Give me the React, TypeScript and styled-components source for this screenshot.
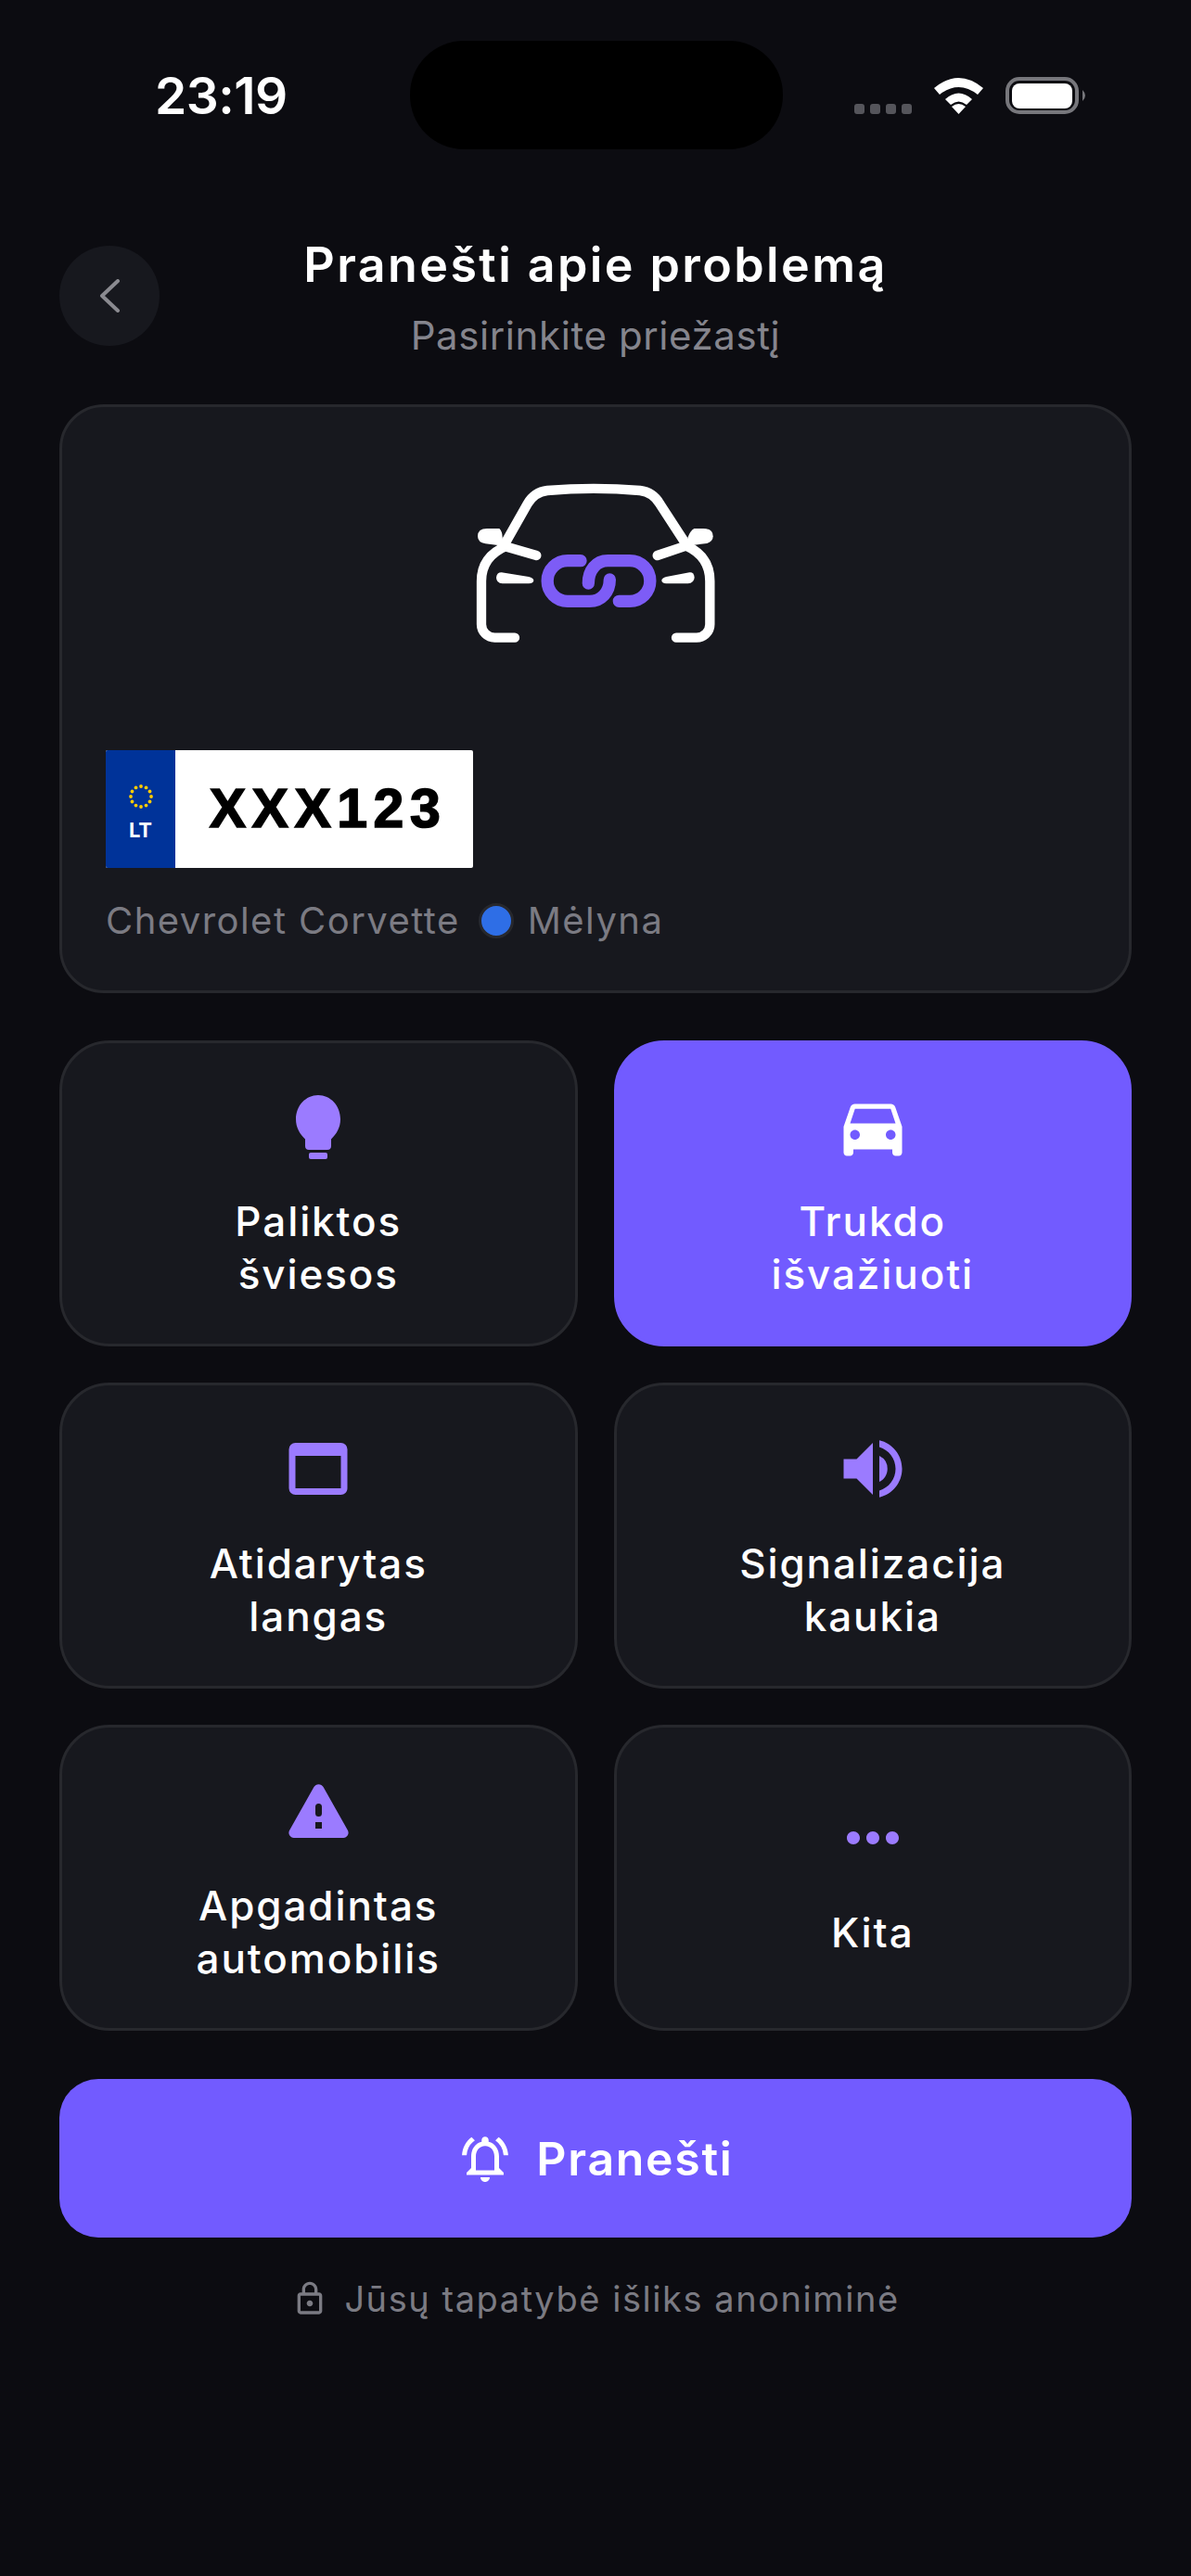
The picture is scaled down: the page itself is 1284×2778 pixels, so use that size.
import * as React from "react";
import styled, { createGlobalStyle } from "styled-components";
import {
  MdDirectionsCar,
  MdMoreHoriz,
  MdOutlineLock,
  MdOutlineNotificationsActive,
  MdVolumeUp,
  MdWebAsset,
} from "react-icons/md";

const Global = createGlobalStyle`
  html, body {
    margin: 0;
    padding: 0;
    background: #0c0c11;
  }
  * { box-sizing: border-box; }
`;

const Screen = styled.div`
  width: 1284px;
  height: 2778px;
  background: #0c0c11;
  color: #fff;
  font-family: Inter, "Liberation Sans", sans-serif;
  padding: 44px 64px 0;
  display: flex;
  flex-direction: column;
  overflow: hidden;
`;

const StatusBar = styled.div`
  display: grid;
  grid-template-columns: 275px 402px 1fr;
  height: 117px;
  margin: 0 -64px;
  padding-left: 167px;
  padding-right: 111px;
`;

const Clock = styled.div`
  font-size: 55px;
  font-weight: 600;
  line-height: 40px;
  letter-spacing: -0.5px;
  margin-top: 39px;
`;

const Island = styled.div`
  background: #000;
  border-radius: 58px;
`;

const StatusIcons = styled.div`
  display: flex;
  justify-content: flex-end;
  align-items: flex-start;
  margin-top: 36px;
`;

const Header = styled.div`
  display: grid;
  grid-template-columns: 108px 1fr 108px;
  align-items: start;
  margin-top: 94px;
`;

const BackButton = styled.div`
  width: 108px;
  height: 108px;
  border-radius: 50%;
  background: #17181e;
  display: flex;
  align-items: center;
  justify-content: center;
  margin-top: 10px;
`;

const Heading = styled.div`
  text-align: center;
`;

const Title = styled.div`
  font-size: 52px;
  font-weight: 600;
  line-height: 62px;
  letter-spacing: 2.4px;
`;

const Subtitle = styled.div`
  font-size: 42px;
  line-height: 50px;
  margin-top: 20px;
  color: #85858d;
  letter-spacing: 0.6px;
`;

const VehicleCard = styled.div`
  margin-top: 49px;
  height: 635px;
  background: #17181e;
  border: 3px solid #27282d;
  border-radius: 48px;
  padding: 51px 47px 0;
  display: flex;
  flex-direction: column;
`;

const LogoWrap = styled.div`
  display: flex;
  justify-content: center;
  margin-right: 4px;
  height: 230px;
`;

const Plate = styled.div`
  margin-top: 89px;
  width: 396px;
  height: 127px;
  display: flex;
  background: #fff;
  border-radius: 2px;
  overflow: hidden;
`;

const PlateBand = styled.div`
  width: 75px;
  background: #003399;
  display: flex;
  flex-direction: column;
  align-items: center;
  padding-top: 36px;
`;

const PlateCountry = styled.div`
  font-size: 22px;
  font-weight: 700;
  line-height: 22px;
  margin-top: 11px;
  color: #fff;
`;

const PlateNumber = styled.div`
  flex: 1;
  color: #000;
  font-family: "Liberation Sans", Arial, sans-serif;
  font-size: 59px;
  font-weight: 700;
  letter-spacing: 6.5px;
  -webkit-text-stroke: 1.6px #000;
  text-align: center;
  line-height: 127px;
  padding-left: 8px;
`;

const VehicleMeta = styled.div`
  margin-top: 32px;
  display: flex;
  align-items: center;
  font-size: 40px;
  line-height: 50px;
  letter-spacing: 1.45px;
  color: #7b7b83;
`;

const ColorDot = styled.span<{ $color: string }>`
  width: 38px;
  height: 38px;
  border-radius: 50%;
  background: ${(p) => p.$color};
  border: 3px solid #27282d;
  margin: 0 15px 0 20px;
`;

const ReasonGrid = styled.div`
  margin-top: 51px;
  display: grid;
  grid-template-columns: 1fr 1fr;
  grid-auto-rows: 330px;
  column-gap: 39px;
  row-gap: 39px;
`;

const Reason = styled.div<{ $active?: boolean }>`
  background: ${(p) => (p.$active ? "#725bff" : "#17181e")};
  border: 3px solid ${(p) => (p.$active ? "#725bff" : "#27282d")};
  border-radius: 54px;
  display: flex;
  flex-direction: column;
  align-items: center;
  justify-content: center;
  color: ${(p) => (p.$active ? "#fff" : "#9b7bff")};
  padding-top: 2px;
`;

const ReasonIcon = styled.div`
  height: 84px;
  display: flex;
  align-items: center;
  justify-content: center;
  font-size: 84px;
  svg { display: block; }
`;

const ReasonLabel = styled.div`
  margin-top: 32px;
  font-size: 44px;
  font-weight: 500;
  line-height: 57px;
  letter-spacing: 1.9px;
  text-align: center;
  color: #fff;
  white-space: pre-line;
`;

const SubmitButton = styled.div`
  margin-top: 52px;
  height: 171px;
  border-radius: 42px;
  background: #725bff;
  display: flex;
  align-items: center;
  justify-content: center;
  gap: 25px;
  font-size: 50px;
  font-weight: 600;
  letter-spacing: 1.7px;
  svg { display: block; }
`;

const Anonymous = styled.div`
  margin-top: 43px;
  display: flex;
  align-items: center;
  justify-content: center;
  gap: 17px;
  font-size: 38px;
  line-height: 46px;
  letter-spacing: 1.55px;
  color: #7b7b83;
  svg { display: block; }
`;

const CarLogo = () => (
  <svg width="340" height="230" viewBox="0 0 1020 690" fill="none">
    <g stroke="#fff" strokeWidth="31" strokeLinecap="round" strokeLinejoin="round">
      <path d="M228 280 L296 160 Q318 122 360 117 Q510 104 660 117 Q702 122 724 160 L802 280" />
      <path d="M228 296 Q147 330 147 410 L147 550 A43 43 0 0 0 190 593 L255 593" />
      <path d="M810 296 Q886 330 886 410 L886 550 A43 43 0 0 1 843 593 L777 593" />
      <path d="M224 298 L325 327" />
      <path d="M802 298 L716 327" />
    </g>
    <g fill="#fff">
      <path d="M165 240 L205 240 Q215 250 215 268 L218 296 L160 289 Q135 285 135 265 Q135 240 165 240 Z" />
      <path d="M855 240 L835 240 Q822 248 815 268 L812 296 L870 289 Q896 285 896 265 Q896 240 865 240 Z" />
      <path d="M212 382 L300 396 Q316 400 316 408 Q316 417 300 418 L215 418 Q195 416 195 398 Q197 382 212 382 Z" />
      <path d="M820 382 L745 396 Q730 400 730 408 Q730 417 745 418 L815 418 Q835 416 836 398 Q834 380 820 382 Z" />
    </g>
    <g stroke="#7d5cf6" strokeWidth="40" strokeLinecap="round" fill="none">
      <path d="M468 344 H426 A65.5 65.5 0 0 0 426 475 H497 C535 475 562 445 562 405" />
      <path d="M592 475 H627 A65.5 65.5 0 0 0 627 344 H556 C518 344 493 375 493 417" />
    </g>
  </svg>
);

const StarRing = () => {
  const stars = Array.from({ length: 12 }, (_, i) => (i * Math.PI) / 6);
  return (
    <svg width="28" height="28" viewBox="0 0 28 28">
      {stars.map((a) => (
        <circle key={a} cx={14 + 11 * Math.cos(a)} cy={14 + 11 * Math.sin(a)} r="1.9" fill="#ffcc00" />
      ))}
    </svg>
  );
};

const Bulb = () => (
  <svg width="48" height="69" viewBox="0 0 48 69" fill="currentColor">
    <path d="M24 0C10.7 0 0 11.4 0 26c0 9 4.3 16 10 21.5V55c0 2.5 1.5 4 4 4h20c2.5 0 4-1.5 4-4v-7.5C43.7 42 48 35 48 26 48 11.4 37.3 0 24 0Z" />
    <rect x="14" y="62" width="20" height="7" rx="2" />
  </svg>
);

const AlertTriangle = () => (
  <svg width="65" height="58" viewBox="0 0 65 58" fill="currentColor" fillRule="evenodd">
    <path d="M27.5 3a5.8 5.8 0 0 1 10 0L64 50a5.5 5.5 0 0 1-4.8 8H5.8a5.5 5.5 0 0 1-4.8-8ZM32.5 21a3.5 3.5 0 0 1 3.5 3.5v7a3.5 3.5 0 0 1-7 0v-7a3.5 3.5 0 0 1 3.5-3.5ZM29 41h7v7h-7Z" />
  </svg>
);

const reasons = [
  { label: "Paliktos\nšviesos", icon: <Bulb /> },
  { label: "Trukdo\nišvažiuoti", icon: <MdDirectionsCar />, active: true },
  { label: "Atidarytas\nlangas", icon: <MdWebAsset /> },
  { label: "Signalizacija\nkaukia", icon: <MdVolumeUp /> },
  { label: "Apgadintas\nautomobilis", icon: <AlertTriangle /> },
  { label: "Kita", icon: <MdMoreHoriz /> },
];

export default function App() {
  return (
    <Screen>
      <Global />
      <StatusBar>
        <Clock>23:19</Clock>
        <Island />
        <StatusIcons>
          <svg width="252" height="46" viewBox="0 0 252 46">
            <g fill="#55555b">
              <rect x="0" y="32" width="11" height="11" rx="3" />
              <rect x="17" y="32" width="11" height="11" rx="3" />
              <rect x="34" y="32" width="11" height="11" rx="3" />
              <rect x="51" y="32" width="11" height="11" rx="3" />
            </g>
            <path
              d="M86 15 Q112.5 -7 139 15 L133 22 Q112.5 6 92 22 Z M98 27 Q112.5 14 127 27 L121 33 Q112.5 26 104 33 Z M105 35 Q112.5 29 120 35 L112.5 43 Z"
              fill="#fff"
            />
            <rect x="165" y="5" width="75" height="36" rx="13" fill="none" stroke="#77777c" strokeWidth="4" />
            <rect x="170" y="10" width="65" height="27" rx="8" fill="#fff" />
            <path d="M246 17 Q252 23 246 29 Z" fill="#77777c" />
          </svg>
        </StatusIcons>
      </StatusBar>

      <Header>
        <BackButton>
          <svg width="26" height="36" viewBox="0 0 26 36" fill="none">
            <path d="M22 2 L5 18 L22 34" stroke="#8a8a90" strokeWidth="4" strokeLinecap="round" strokeLinejoin="round" />
          </svg>
        </BackButton>
        <Heading>
          <Title>Pranešti apie problemą</Title>
          <Subtitle>Pasirinkite priežastį</Subtitle>
        </Heading>
      </Header>

      <VehicleCard>
        <LogoWrap>
          <CarLogo />
        </LogoWrap>
        <Plate>
          <PlateBand>
            <StarRing />
            <PlateCountry>LT</PlateCountry>
          </PlateBand>
          <PlateNumber>XXX123</PlateNumber>
        </Plate>
        <VehicleMeta>
          Chevrolet Corvette
          <ColorDot $color="#2e6ee6" />
          Mėlyna
        </VehicleMeta>
      </VehicleCard>

      <ReasonGrid>
        {reasons.map((r) => (
          <Reason key={r.label} $active={r.active}>
            <ReasonIcon>{r.icon}</ReasonIcon>
            <ReasonLabel>{r.label}</ReasonLabel>
          </Reason>
        ))}
      </ReasonGrid>

      <SubmitButton>
        <MdOutlineNotificationsActive size={60} />
        Pranešti
      </SubmitButton>

      <Anonymous>
        <MdOutlineLock size={40} />
        Jūsų tapatybė išliks anoniminė
      </Anonymous>
    </Screen>
  );
}
